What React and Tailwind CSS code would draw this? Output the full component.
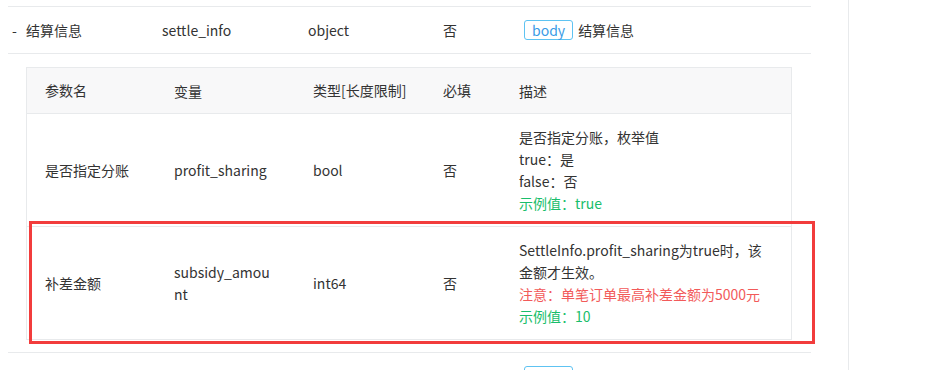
import React from "react";

const font = { fontFamily: '"Noto Sans CJK SC", "Noto Sans", sans-serif' };

const Tag = ({ children }) => (
  <span className="inline-flex items-center h-[20px] px-[7px] border border-[#5ec3f2] rounded-[3px] text-[#3a9be6] text-[14px] leading-none mr-[5px]">
    {children}
  </span>
);

const OuterRow = ({ sign, name, field, type, required, desc }) => (
  <div className="flex items-center h-[47px] border-b border-[#e8eaec] text-[14px] text-[#333]">
    <div className="w-[154px] pl-[4px] flex items-center">
      <span className="w-[14px]">{sign}</span>
      {name}
    </div>
    <div className="w-[146px]">{field}</div>
    <div className="w-[135px]">{type}</div>
    <div className="w-[81px]">{required}</div>
    <div className="flex items-center">
      <Tag>body</Tag>
      {desc}
    </div>
  </div>
);

const InnerRow = ({ cells, header, tall }) => (
  <div
    className={
      "flex items-center text-[14px] text-[#333] border-b border-[#e8eaec] " +
      (header ? "h-[46px] bg-[#f8f8f9]" : "h-[113px]")
    }
  >
    <div className="w-[147px] pl-[18px]">{cells[0]}</div>
    <div className="w-[139px] leading-[22px]">{cells[1]}</div>
    <div className="w-[130px]">{cells[2]}</div>
    <div className="w-[76px]">{cells[3]}</div>
    <div className="flex-1 leading-[22px]">{cells[4]}</div>
  </div>
);

export default function App() {
  return (
    <div className="relative w-[927px] h-[370px] overflow-hidden bg-white flex" style={font}>
      <div className="w-[848px] pt-[6px]">
        <div className="ml-[8px] w-[803px] border-t border-[#e8eaec]">
          <OuterRow sign="-" name="结算信息" field="settle_info" type="object" required="否" desc="结算信息" />
          <div className="pt-[13px] pb-[12px] pl-[18px] pr-[19px] border-b border-[#e8eaec]">
            <div className="border border-b-0 border-[#e8eaec]">
              <InnerRow header cells={["参数名", "变量", "类型[长度限制]", "必填", "描述"]} />
              <InnerRow
                cells={[
                  "是否指定分账",
                  "profit_sharing",
                  "bool",
                  "否",
                  <>
                    <div>是否指定分账，枚举值</div>
                    <div>true：是</div>
                    <div>false：否</div>
                    <div className="text-[#19be6b]">示例值：true</div>
                  </>,
                ]}
              />
              <InnerRow
                cells={[
                  "补差金额",
                  <>
                    <div>subsidy_amou</div>
                    <div>nt</div>
                  </>,
                  "int64",
                  "否",
                  <>
                    <div>SettleInfo.profit_sharing为true时，该</div>
                    <div>金额才生效。</div>
                    <div className="text-[#f25a5a]">注意：单笔订单最高补差金额为5000元</div>
                    <div className="text-[#19be6b]">示例值：10</div>
                  </>,
                ]}
              />
            </div>
          </div>
          <OuterRow sign="+" name="分账接收方" field="receivers" type="array" required="否" desc="分账接收方" />
        </div>
      </div>
      <div className="flex-1 border-l border-[#e8eaec]" />
      <div className="absolute left-[29px] top-[221px] w-[786px] h-[123px] border-[3px] border-[#f23c3c] pointer-events-none" />
    </div>
  );
}
